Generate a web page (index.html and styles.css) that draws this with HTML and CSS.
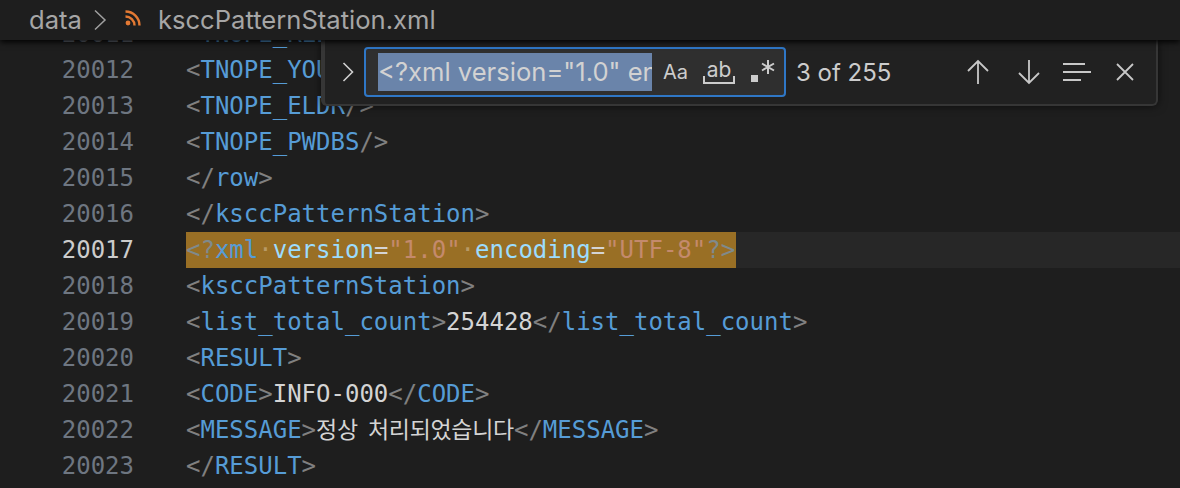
FILE: index.html
```html
<!DOCTYPE html>
<html lang="ko">
<head>
<meta charset="utf-8">
<title>ksccPatternStation.xml</title>
<link rel="stylesheet" href="styles.css">
</head>
<body>
<div class="app">
  <header class="crumbs">
    <span class="crumb">data</span>
    <svg class="crumb-sep" width="14" height="22" viewBox="0 0 14 22"><path d="M2 1.500 L12 11 L2 20.500" fill="none" stroke="#a0a0a0" stroke-width="1.500"/></svg>
    <svg class="rss" width="16" height="16" viewBox="0 0 16 16"><circle cx="3" cy="13" r="2.400" fill="#e37933"/><path d="M0.500 6.500 A9 9 0 0 1 9.500 15.500" fill="none" stroke="#e37933" stroke-width="2.400"/><path d="M0.500 1.500 A14 14 0 0 1 14.500 15.500" fill="none" stroke="#e37933" stroke-width="2.400"/></svg>
    <span class="crumb file">ksccPatternStation.xml</span>
  </header>
  <main class="editor">
    <div class="code">
      <div class="line"><span class="num">20011</span><span class="src"><i>&lt;</i><b>TNOPE_RLE</b><i>/&gt;</i></span></div>
      <div class="line"><span class="num">20012</span><span class="src"><i>&lt;</i><b>TNOPE_YOUTH</b><i>/&gt;</i></span></div>
      <div class="line"><span class="num">20013</span><span class="src"><i>&lt;</i><b>TNOPE_ELDR</b><i>/&gt;</i></span></div>
      <div class="line"><span class="num">20014</span><span class="src"><i>&lt;</i><b>TNOPE_PWDBS</b><i>/&gt;</i></span></div>
      <div class="line"><span class="num">20015</span><span class="src"><i>&lt;/</i><b>row</b><i>&gt;</i></span></div>
      <div class="line"><span class="num">20016</span><span class="src"><i>&lt;/</i><b>ksccPatternStation</b><i>&gt;</i></span></div>
      <div class="line current"><span class="num">20017</span><span class="src"><span class="match"><i>&lt;?</i><b>xml</b><u>·</u><em>version</em><s>=</s><q>"1.0"</q><u>·</u><em>encoding</em><s>=</s><q>"UTF-8"</q><i>?&gt;</i></span></span></div>
      <div class="line"><span class="num">20018</span><span class="src"><i>&lt;</i><b>ksccPatternStation</b><i>&gt;</i></span></div>
      <div class="line"><span class="num">20019</span><span class="src"><i>&lt;</i><b>list_total_count</b><i>&gt;</i>254428<i>&lt;/</i><b>list_total_count</b><i>&gt;</i></span></div>
      <div class="line"><span class="num">20020</span><span class="src"><i>&lt;</i><b>RESULT</b><i>&gt;</i></span></div>
      <div class="line"><span class="num">20021</span><span class="src"><i>&lt;</i><b>CODE</b><i>&gt;</i>INFO-000<i>&lt;/</i><b>CODE</b><i>&gt;</i></span></div>
      <div class="line"><span class="num">20022</span><span class="src"><i>&lt;</i><b>MESSAGE</b><i>&gt;</i><span class="ko">정상 처리되었습니다</span><i>&lt;/</i><b>MESSAGE</b><i>&gt;</i></span></div>
      <div class="line"><span class="num">20023</span><span class="src"><i>&lt;/</i><b>RESULT</b><i>&gt;</i></span></div>
    </div>
    <section class="find">
      <svg class="toggle" width="12" height="20" viewBox="0 0 12 20"><path d="M1.500 1 L10.500 10 L1.500 19" fill="none" stroke="#d0d0d0" stroke-width="1.600"/></svg>
      <div class="input">
        <span class="query"><span class="sel">&lt;?xml version="1.0" en</span></span>
        <span class="opt aa">Aa</span>
        <span class="opt ab">ab</span>
        <svg class="opt re" width="25" height="24" viewBox="0 0 25 24"><rect x="0" y="16" width="7" height="7" fill="#cccccc"/><path d="M17 1 V15 M11 4.500 L23 11.500 M23 4.500 L11 11.500" fill="none" stroke="#cccccc" stroke-width="2"/></svg>
      </div>
      <span class="count">3 of 255</span>
      <div class="actions">
        <svg class="prev" width="22" height="26" viewBox="0 0 22 26"><path d="M11 25 V2 M1 12 L11 2 L21 12" fill="none" stroke="#c8c8c8" stroke-width="1.800"/></svg>
        <svg class="next" width="22" height="26" viewBox="0 0 22 26"><path d="M11 1 V24 M1 14 L11 24 L21 14" fill="none" stroke="#c8c8c8" stroke-width="1.800"/></svg>
        <svg class="sel-lines" width="28" height="20" viewBox="0 0 28 20"><path d="M0 2 H22 M0 10 H28 M0 18 H18" fill="none" stroke="#c8c8c8" stroke-width="1.800"/></svg>
        <svg class="close" width="18" height="18" viewBox="0 0 18 18"><path d="M1 1 L17 17 M17 1 L1 17" fill="none" stroke="#c8c8c8" stroke-width="1.800"/></svg>
      </div>
    </section>
  </main>
</div>
</body>
</html>
```
FILE: styles.css
```css
* { box-sizing: border-box; }
html, body { margin: 0; height: 100%; background: #1e1e1e; overflow: hidden; }
.app { width: 1180px; height: 488px; display: flex; flex-direction: column; }

.crumbs {
  height: 40px;
  flex: none;
  display: flex;
  align-items: center;
  padding-left: 29px;
  background: #1e1e1e;
  box-shadow: 0 2px 6px #000;
  position: relative;
  z-index: 3;
  font: 25.6px/40px Inter, "Liberation Sans", sans-serif;
  color: #a6a6a6;
}
.crumb-sep { margin-left: 11px; }
.rss { margin-left: 18px; margin-top: -5px; }
.file { margin-left: 17px; }

.editor { flex: 1; position: relative; overflow: hidden; }
.code {
  margin-top: -24px;
  font: 24px/36px "DejaVu Sans Mono", "Noto Sans CJK KR", monospace;
  color: #d4d4d4;
}
.line { height: 36px; display: flex; white-space: pre; }
.num { width: 134px; text-align: right; color: #6e7681; flex: none; }
.src { margin-left: 52px; flex: 1; }
.current .src { background: #272727; }
.current .num { color: #cccccc; }
.match { display: inline-block; height: 36px; padding-right: 1px; background: #996f25; }

i, b, u, em, s, q { font-style: normal; font-weight: normal; text-decoration: none; }
q { quotes: none; color: #c48a6c; }
i { color: #808080; }
b { color: #569cd6; }
em { color: #9cdcfe; }
s { color: #d4d4d4; }
u { color: #b89a66; }
.match i { color: #7f8a8c; }
.ko { font-family: "Noto Sans CJK KR", sans-serif; font-size: 23px; line-height: 0; letter-spacing: -0.300px; word-spacing: 4px; }

.find {
  position: absolute;
  top: 0;
  left: 321px;
  width: 837px;
  height: 66px;
  display: flex;
  align-items: center;
  background: #212121;
  border: solid #363636;
  border-width: 0 2px 2px 4px;
  border-radius: 0 0 6px 6px;
  box-shadow: 0 0 10px rgba(0,0,0,0.6);
  z-index: 2;
  font-family: Inter, "Liberation Sans", sans-serif;
  color: #cccccc;
}
.toggle { margin-left: 17px; flex: none; }
.input {
  margin-left: 10px;
  width: 422px;
  height: 50px;
  flex: none;
  display: flex;
  align-items: center;
  padding-left: 12px;
  background: #2f2f2f;
  border: 2px solid #2f77c6;
  border-radius: 4px;
}
.query { width: 274px; height: 38px; overflow: hidden; flex: none; font-size: 25.6px; line-height: 38px; white-space: pre; }
.sel { display: inline-block; background: #6a84aa; color: #d2d2d2; height: 38px; }
.opt { flex: none; color: #cccccc; }
.aa { margin-left: 11px; font-size: 20px; }
.ab {
  position: relative;
  margin-left: 15px;
  width: 32px;
  height: 24px;
  font-size: 21px;
  line-height: 20px;
  text-align: center;
}
.ab::after {
  content: "";
  position: absolute;
  left: 0;
  right: 0;
  bottom: 0;
  height: 6px;
  border: 2px solid #cccccc;
  border-top: 0;
}
.re { margin-left: 16px; margin-top: -2px; }
.count { margin-left: 10px; font-size: 24px; flex: none; width: 150px; }
.actions { display: flex; align-items: center; margin-left: 21px; margin-top: -1px; }
.next { margin-left: 29px; }
.sel-lines { margin-left: 23px; }
.close { margin-left: 25px; }
```
